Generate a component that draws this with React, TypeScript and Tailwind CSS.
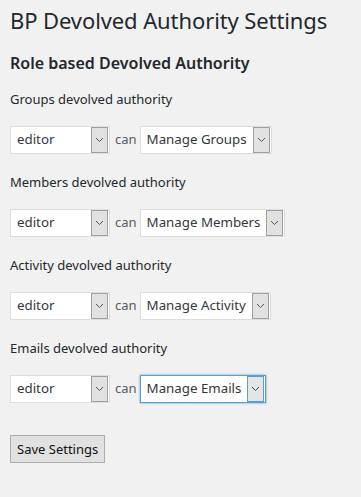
import React from "react";

const font = { fontFamily: '"Noto Sans", "Open Sans", sans-serif' };

function Chevron({ blue }: { blue?: boolean }) {
  return (
    <svg width="9" height="6" viewBox="0 0 9 6" fill="none">
      <path d="M1 1l3.5 3.5L8 1" stroke={blue ? "#1e4f8a" : "#555"} strokeWidth="1" />
    </svg>
  );
}

function Select({ value, focused, w }: { value: string; focused?: boolean; w?: string }) {
  return (
    <div
      className={`flex h-[28px] items-center bg-white border ${w ?? ""} ${
        focused ? "border-[#5b9dd9] shadow-[0_0_2px_rgba(30,140,190,0.8)]" : "border-[#ddd]"
      }`}
    >
      <span className="flex-1 pl-[6px] pr-[6px] text-[13.3px] text-[#32373c] leading-none whitespace-nowrap">{value}</span>
      <div
        className={`mr-[1px] flex h-[26px] w-[17px] shrink-0 items-center justify-center border ${
          focused ? "border-[#5b9dd9] bg-[#e5e5e5]" : "border-[#a0a0a0] bg-[#e1e1e1]"
        }`}
      >
        <Chevron blue={focused} />
      </div>
    </div>
  );
}

function Row({ label, cap, focused }: { label: string; cap: string; focused?: boolean }) {
  return (
    <div className="flex flex-col">
      <div className="text-[13px] leading-[18px] text-[#23282d] h-[18px]">{label}</div>
      <div className="mt-[18px] flex items-center">
        <Select value="editor" w="w-[100px]" />
        <span className="ml-[5px] mr-[3px] text-[13px] text-[#555d66]">can</span>
        <Select value={cap} focused={focused} />
      </div>
    </div>
  );
}

export default function App() {
  return (
    <div className="min-h-[497px] w-[361px] bg-[#f1f1f1] pl-[10px] pt-[6px]" style={font}>
      <h1 className="text-[22px] leading-[29px] tracking-[-0.1px] font-normal text-[#23282d]">BP Devolved Authority Settings</h1>
      <h2 className="mt-[17px] text-[16px] leading-[22px] font-semibold text-[#23282d]">Role based Devolved Authority</h2>
      <div className="mt-[16px] flex flex-col gap-[19px]">
        <Row label="Groups devolved authority" cap="Manage Groups" />
        <Row label="Members devolved authority" cap="Manage Members" />
        <Row label="Activity devolved authority" cap="Manage Activity" />
        <Row label="Emails devolved authority" cap="Manage Emails" focused />
      </div>
      <button className="mt-[32px] h-[28px] border border-[#adadad] bg-[#e1e1e1] px-[6px] text-[13px] text-[#111] leading-none">
        Save Settings
      </button>
    </div>
  );
}
